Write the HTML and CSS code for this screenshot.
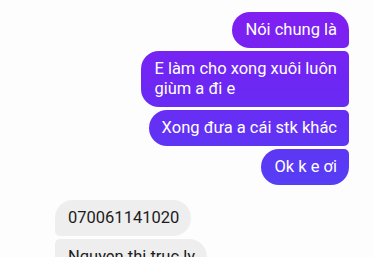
FILE: index.html
```html
<!DOCTYPE html>
<html lang="vi">
<head>
    <meta charset="UTF-8">
    <meta name="viewport" content="width=device-width, initial-scale=1.0">
    <title>Tin nhắn</title>
    <link rel="stylesheet" href="styles.css">
</head>
<body>
    <div class="chat">
        <div class="group sent">
            <div class="bubble first">Nói chung là</div>
            <div class="bubble middle">E làm cho xong xuôi luôn<br>giùm a đi e</div>
            <div class="bubble middle">Xong đưa a cái stk khác</div>
            <div class="bubble last">Ok k e ơi</div>
        </div>

        <div class="group received">
            <div class="bubble first">070061141020</div>
            <div class="bubble middle">Nguyen thi truc ly</div>
        </div>
    </div>
</body>
</html>
```

FILE: styles.css
```css
* {
    box-sizing: border-box;
    margin: 0;
    padding: 0;
}

body {
    background-color: #fdfdfd;
    font-family: Roboto, "Noto Sans", Arial, sans-serif;
    width: 374px;
    height: 257px;
    overflow: hidden;
}

.chat {
    padding: 12px 25px 0 55px;
    display: flex;
    flex-direction: column;
    gap: 15px;
}

.group {
    display: flex;
    flex-direction: column;
    gap: 3px;
}

.sent {
    align-items: flex-end;
}

.received {
    align-items: flex-start;
}

.bubble {
    font-size: 16.5px;
    line-height: 20px;
    padding: 8px 12px 8px 13px;
}

.sent .bubble {
    color: #ffffff;
    background: linear-gradient(180deg, #841df1 0px, #6c28f3 90px, #5440f5 190px);
    background-attachment: fixed;
    border-radius: 18px 5px 5px 18px;
}

.sent .first {
    border-top-right-radius: 18px;
}

.sent .last {
    border-bottom-right-radius: 18px;
}

.received .bubble {
    color: #1c1c1c;
    background-color: #eeeeee;
    border-radius: 5px 18px 18px 5px;
}

.received .first {
    border-top-left-radius: 18px;
}
```
